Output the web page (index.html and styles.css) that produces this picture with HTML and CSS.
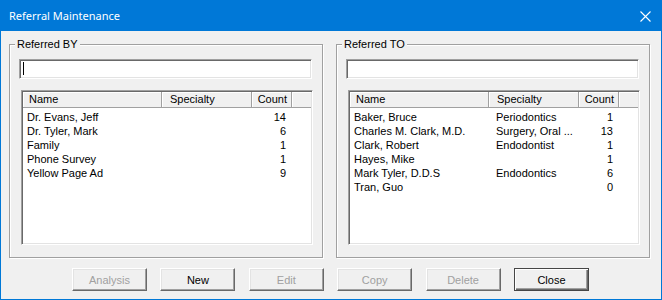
FILE: index.html
```html
<!DOCTYPE html>
<html lang="en">
<head>
    <meta charset="UTF-8">
    <title>Referral Maintenance</title>
    <link rel="stylesheet" href="styles.css">
</head>
<body>
    <div class="window">
        <div class="titlebar">
            <span class="title">Referral Maintenance</span>
            <svg class="close-x" width="11" height="11" viewBox="0 0 11 11">
                <path d="M0.5 0.5 L10.5 10.5 M10.5 0.5 L0.5 10.5" stroke="#fff" stroke-width="1.1" fill="none"/>
            </svg>
        </div>
        <div class="client">
            <div class="groups">
                <fieldset class="group">
                    <legend>Referred BY</legend>
                    <div class="field"><span class="caret"></span></div>
                    <div class="listview">
                        <div class="lv-header">
                            <div class="hcell name">Name</div>
                            <div class="hcell spec">Specialty</div>
                            <div class="hcell count">Count</div>
                            <div class="hcell filler"></div>
                        </div>
                        <div class="lv-body">
                            <div class="row"><span class="c-name">Dr. Evans, Jeff</span><span class="c-spec"></span><span class="c-count">14</span></div>
                            <div class="row"><span class="c-name">Dr. Tyler, Mark</span><span class="c-spec"></span><span class="c-count">6</span></div>
                            <div class="row"><span class="c-name">Family</span><span class="c-spec"></span><span class="c-count">1</span></div>
                            <div class="row"><span class="c-name">Phone Survey</span><span class="c-spec"></span><span class="c-count">1</span></div>
                            <div class="row"><span class="c-name">Yellow Page Ad</span><span class="c-spec"></span><span class="c-count">9</span></div>
                        </div>
                    </div>
                </fieldset>
                <fieldset class="group">
                    <legend>Referred TO</legend>
                    <div class="field"></div>
                    <div class="listview">
                        <div class="lv-header">
                            <div class="hcell name">Name</div>
                            <div class="hcell spec">Specialty</div>
                            <div class="hcell count">Count</div>
                            <div class="hcell filler"></div>
                        </div>
                        <div class="lv-body">
                            <div class="row"><span class="c-name">Baker, Bruce</span><span class="c-spec">Periodontics</span><span class="c-count">1</span></div>
                            <div class="row"><span class="c-name">Charles M. Clark, M.D.</span><span class="c-spec">Surgery, Oral ...</span><span class="c-count">13</span></div>
                            <div class="row"><span class="c-name">Clark, Robert</span><span class="c-spec">Endodontist</span><span class="c-count">1</span></div>
                            <div class="row"><span class="c-name">Hayes, Mike</span><span class="c-spec"></span><span class="c-count">1</span></div>
                            <div class="row"><span class="c-name">Mark Tyler, D.D.S</span><span class="c-spec">Endodontics</span><span class="c-count">6</span></div>
                            <div class="row"><span class="c-name">Tran, Guo</span><span class="c-spec"></span><span class="c-count">0</span></div>
                        </div>
                    </div>
                </fieldset>
            </div>
            <div class="buttons">
                <div class="btn disabled">Analysis</div>
                <div class="btn">New</div>
                <div class="btn disabled">Edit</div>
                <div class="btn disabled">Copy</div>
                <div class="btn disabled">Delete</div>
                <div class="btn default">Close</div>
            </div>
        </div>
    </div>
</body>
</html>
```

FILE: styles.css
```css
body {
    margin: 0;
    background-color: #f0f0f0;
    font-family: "Liberation Sans", Arial, sans-serif;
    font-size: 11px;
    color: #000;
}

.window {
    width: 662px;
    height: 300px;
    box-sizing: border-box;
    border: 1px solid #0078d7;
    background-color: #f0f0f0;
    display: flex;
    flex-direction: column;
}

/* title bar */
.titlebar {
    height: 30px;
    background-color: #0078d7;
    display: flex;
    align-items: center;
    justify-content: space-between;
    padding: 0 10px 0 8px;
    flex-shrink: 0;
}

.title {
    color: #fff;
    font-family: "Noto Sans", "Open Sans", sans-serif;
    font-size: 11px;
    line-height: 16px;
}

.close-x {
    display: block;
}

/* dialog area */
.client {
    padding: 6px 11px 0 8px;
}

.groups {
    display: flex;
    gap: 13px;
}

.group {
    width: 314px;
    box-sizing: border-box;
    margin: 0;
    min-width: 0;
    padding: 8px 10px 12px 9px;
    border: 1px solid #a0a0a0;
    box-shadow: 1px 1px 0 #fff, inset 1px 1px 0 #fff;
}

.group legend {
    padding: 0 2px;
    margin-left: -4px;
    line-height: 14px;
    background-color: #f0f0f0;
}

/* sunken 3d edge used by edit and list */
.field,
.listview {
    border: 1px solid;
    border-color: #a0a0a0 #fff #fff #a0a0a0;
    box-shadow: inset 1px 1px 0 #696969, inset -1px -1px 0 #e3e3e3;
    background-color: #fff;
}

.field {
    height: 20px;
    box-sizing: border-box;
    padding: 2px 0 0 2px;
}

.caret {
    display: block;
    width: 1px;
    height: 13px;
    margin-left: 1px;
    background-color: #000;
}

.listview {
    margin-top: 11px;
    margin-left: 2px;
    margin-right: -1px;
    height: 155px;
    box-sizing: border-box;
    padding: 1px;
}

.lv-header {
    display: grid;
    grid-template-columns: 139px 90px 40px 1fr;
    height: 16px;
}

.hcell {
    box-sizing: border-box;
    background-color: #f0f0f0;
    border-right: 1px solid #a0a0a0;
    border-bottom: 1px solid #a0a0a0;
    box-shadow: inset 1px 1px 0 #fff;
    line-height: 15px;
    white-space: nowrap;
}

.hcell.name {
    padding-left: 6px;
}

.hcell.spec {
    padding-left: 8px;
}

.hcell.count {
    text-align: right;
    padding-right: 4px;
}

.hcell.filler {
    border-right: none;
}

.lv-body {
    padding-top: 2px;
}

.row {
    display: grid;
    grid-template-columns: 139px 90px 40px;
    height: 14px;
    line-height: 14px;
    white-space: nowrap;
}

.c-name {
    padding-left: 4px;
    overflow: hidden;
}

.c-spec {
    padding-left: 7px;
    overflow: hidden;
}

.c-count {
    text-align: right;
    padding-right: 6px;
}

/* push buttons */
.buttons {
    display: flex;
    justify-content: center;
    gap: 13.4px;
    margin-top: 10px;
    padding-left: 2px;
}

.btn {
    width: 75px;
    height: 23px;
    box-sizing: border-box;
    border: 1px solid;
    border-color: #fff #696969 #696969 #fff;
    box-shadow: inset -1px -1px 0 #a0a0a0, inset 1px 1px 0 #e3e3e3;
    background-color: #f0f0f0;
    display: flex;
    align-items: center;
    justify-content: center;
}

.btn.disabled {
    color: #a0a0a0;
}

.btn.default {
    border-color: #464646;
    box-shadow: inset 1px 1px 0 #fff, inset -1px -1px 0 #696969, inset -2px -2px 0 #a0a0a0;
}
```
